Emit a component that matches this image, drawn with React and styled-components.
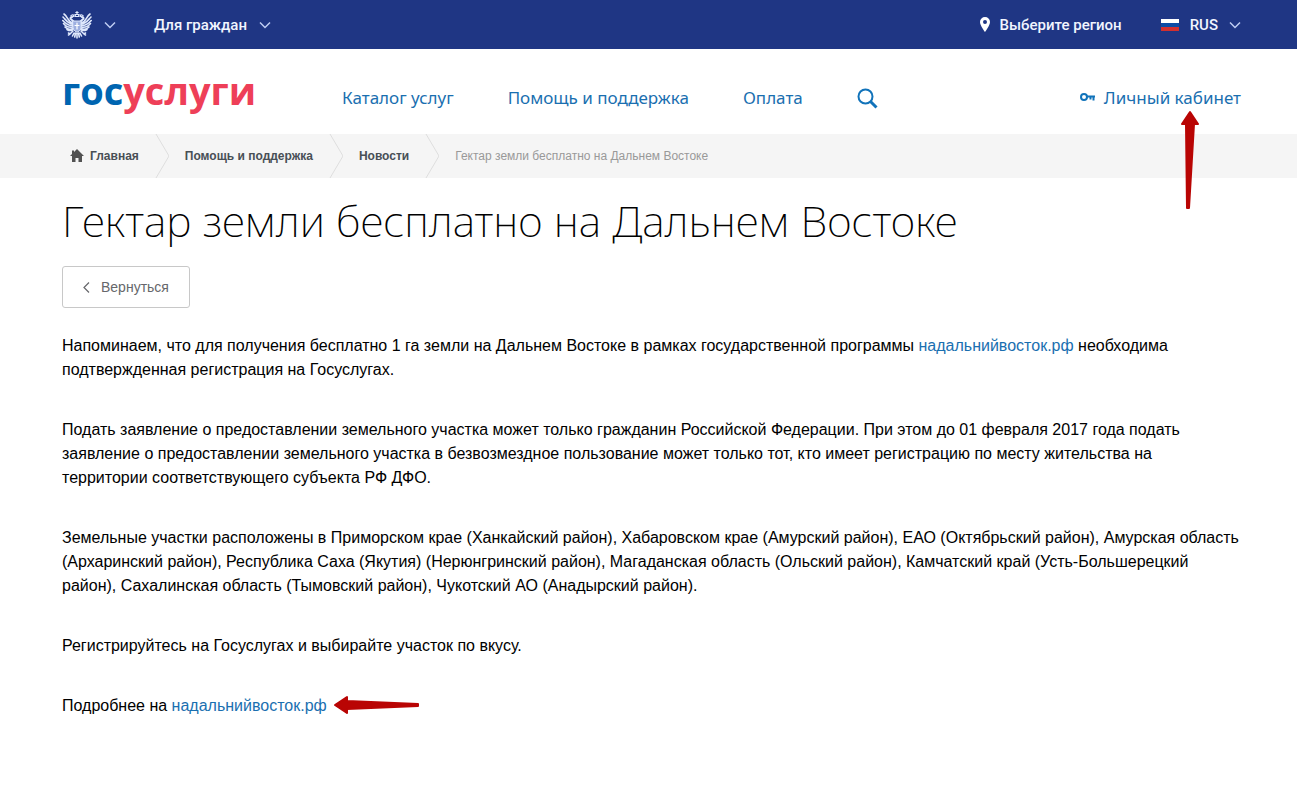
import React from "react";
import styled, { createGlobalStyle } from "styled-components";

const GlobalStyle = createGlobalStyle`
  * { box-sizing: border-box; }
  body { margin: 0; background: #fff; color: #000; font: 16px/24px "Liberation Sans", Arial, sans-serif; }
  a { color: #1a6fb0; text-decoration: none; }
  button { font: inherit; cursor: pointer; }
  svg { display: block; flex: none; }
`;

const Container = styled.div`
  padding: 0 56px 0 62px;
  display: flex;
  align-items: center;
`;

const TopBar = styled(Container)`
  height: 49px;
  background: #1f3684;
  font: 500 15px/20px Roboto, sans-serif;
`;

const TopButton = styled.button`
  display: flex;
  align-items: center;
  gap: ${(p) => p.$gap || 12}px;
  padding: 0;
  border: 0;
  background: none;
  color: #f1f5ff;
`;

const TopRight = styled.div`
  margin-left: auto;
  display: flex;
  gap: 39px;
`;

const Audience = styled.div`
  margin-left: 38px;
`;

const Header = styled(Container)`
  height: 85px;
  padding-top: 12px;
  font: 17px/24px "Noto Sans", sans-serif;
`;

const Logo = styled.a`
  width: 280px;
  flex: none;
  padding-bottom: 16px;
  font: 700 38px/48px "Open Sans", sans-serif;
  color: #0065b1;
  span { color: #ee3f58; }
`;

const Nav = styled.nav`
  display: flex;
  align-items: center;
  gap: 54px;
`;

const SearchButton = styled.button`
  padding: 0;
  border: 0;
  background: none;
  color: #1173ba;
`;

const Account = styled.a`
  position: relative;
  margin-left: auto;
  display: flex;
  align-items: center;
  gap: 9px;
`;

const UpPointer = styled.svg`
  position: absolute;
  top: 24px;
  right: 42px;
`;

const Crumbs = styled(Container).attrs({ as: "nav" })`
  height: 44px;
  padding-left: 70px;
  background: #f5f5f5;
  font: 12px/16px "Liberation Sans", Arial, sans-serif;
  color: #999;
`;

const Crumb = styled.a`
  && { color: #484f56; }
  display: flex;
  align-items: center;
  gap: 6px;
  font-weight: 700;
`;

const Divider = styled.svg`
  margin: 0 16px;
`;

const Main = styled.main`
  padding: 20px 56px 40px 62px;
`;

const Title = styled.h1`
  margin: 0;
  font: 200 43px/46px "Noto Sans", sans-serif;
`;

const BackButton = styled.button`
  display: flex;
  align-items: center;
  gap: 11px;
  height: 42px;
  margin: 22px 0 26px;
  padding: 0 20px;
  border: 1px solid #c8c8c8;
  border-radius: 3px;
  background: #fff;
  color: #66676b;
  font-size: 14px;
`;

const Paragraph = styled.p`
  margin: 0 0 36px;
`;

const PointedLink = styled.a`
  position: relative;
`;

const LeftPointer = styled.svg`
  position: absolute;
  bottom: 0;
  left: 100%;
  margin-left: 6px;
`;

const ChevronDown = () => (
  <svg width="12" height="8" viewBox="0 0 12 8" fill="none" stroke="#bfcdf3" strokeWidth="1.5">
    <path d="M1 1.500l5 5 5-5" />
  </svg>
);

const Eagle = () => (
  <svg width="30" height="28" viewBox="0 0 30 28" fill="none" stroke="#dfe8fc" strokeLinecap="round">
    <path d="M15 .5v3M13.800 1.500h2.400M13 3.500h4l-.5 2h-3zM9 4.500l2-.8 1 1.500-2 .8M21 4.500l-2-.8-1 1.500 2 .8" strokeWidth="1.200" />
    <path d="M10 6c-2 0-2 2-.5 2.500L12 11M20 6c2 0 2 2 .5 2.500L18 11" strokeWidth="2" />
    <path d="M11 12C6 11 6 6 2 3M11 13C6 13 4 9 1 6M11 14.500C7 15 3 12 .8 9.500M11 16c-4 1-7.500-1-9.500-3.500M11 17.500c-3 1.500-6 .5-8-1.500M10.500 19c-2 1-3.500.8-5.500-.5" strokeWidth="1.600" />
    <path d="M19 12c5-1 5-6 9-9M19 13c5 0 7-4 10-7M19 14.500c4 .5 8-2.500 10.200-5M19 16c4 1 7.500-1 9.500-3.500M19 17.500c3 1.500 6 .5 8-1.500M19.500 19c2 1 3.500.8 5.500-.5" strokeWidth="1.600" />
    <path d="M11 10h8v7c0 3-4 4-4 4s-4-1-4-4z" fill="#9dafe0" strokeWidth="1" />
    <path d="M15 12v6M13 14.500h4" stroke="#fff" strokeWidth="1.200" />
    <path d="M11 20l-3 3-1.500 1M8 23l-1.500-1M19 20l3 3 1.500 1M22 23l1.500-1M12 22l-1.500 3M13.500 22l-.8 4M15 22v5M16.500 22l.8 4M18 22l1.500 3" strokeWidth="1.600" />
  </svg>
);

const Separator = () => (
  <Divider width="14" height="44" viewBox="0 0 14 44" fill="none" stroke="#dedede" aria-hidden="true">
    <path d="M1 0l13 22L1 44" />
  </Divider>
);

const program = "надальнийвосток.рф";

export default function App() {
  return (
    <>
      <GlobalStyle />
      <TopBar>
        <TopButton $gap={12} aria-label="Портал">
          <Eagle />
          <ChevronDown />
        </TopButton>
        <Audience>
          <TopButton $gap={12}>Для граждан<ChevronDown /></TopButton>
        </Audience>
        <TopRight>
          <TopButton $gap={10}>
            <svg width="10" height="15" viewBox="0 0 10 15" fill="#fff">
              <path fillRule="evenodd" d="M5 0a5 5 0 0 0-5 5c0 3.500 5 10 5 10s5-6.500 5-10a5 5 0 0 0-5-5zm0 3a2 2 0 1 1 0 4 2 2 0 0 1 0-4z" />
            </svg>
            Выберите регион
          </TopButton>
          <TopButton $gap={11}>
            <svg width="18" height="12" viewBox="0 0 18 12">
              <path fill="#fff" d="M0 0h18v4H0z" />
              <path fill="#0b4ba5" d="M0 4h18v4H0z" />
              <path fill="#d12f2f" d="M0 8h18v4H0z" />
            </svg>
            RUS
            <ChevronDown />
          </TopButton>
        </TopRight>
      </TopBar>
      <Header as="header">
        <Logo href="#">гос<span>услуги</span></Logo>
        <Nav>
          <a href="#catalog">Каталог услуг</a>
          <a href="#help">Помощь и поддержка</a>
          <a href="#pay">Оплата</a>
          <SearchButton aria-label="Поиск">
            <svg width="22" height="22" viewBox="0 0 22 22" fill="none" stroke="currentColor">
              <circle cx="8.500" cy="9.500" r="7" strokeWidth="2" />
              <path d="M13.500 14.500l6 6" strokeWidth="3" />
            </svg>
          </SearchButton>
        </Nav>
        <Account href="#account">
          <svg width="15" height="9" viewBox="0 0 15 9" fill="none" stroke="#1173ba" strokeWidth="2">
            <circle cx="4" cy="4" r="3" />
            <path d="M7 3.500h8M13.500 3.500v4M10.500 3.500v3" />
          </svg>
          Личный кабинет
          <UpPointer width="20" height="100" viewBox="0 0 20 100" fill="#b90504" stroke="#b90504" strokeWidth="2" strokeLinejoin="round" aria-hidden="true">
            <path d="M11 2l8 12h-4l-5 84H8L7 14H3z" />
          </UpPointer>
        </Account>
      </Header>
      <Crumbs>
        <Crumb href="#">
          <svg width="14" height="15" viewBox="0 0 14 15" fill="#525252">
            <path d="M7 0l7 7h-2v6H8.500V9h-3v4H2V7H0l2-2V1.500h2V3z" />
          </svg>
          Главная
        </Crumb>
        <Separator />
        <Crumb href="#help">Помощь и поддержка</Crumb>
        <Separator />
        <Crumb href="#news">Новости</Crumb>
        <Separator />
        <span>Гектар земли бесплатно на Дальнем Востоке</span>
      </Crumbs>
      <Main>
        <Title>Гектар земли бесплатно на Дальнем Востоке</Title>
        <BackButton>
          <svg width="7" height="11" viewBox="0 0 7 11" fill="none" stroke="#66676b" strokeWidth="1.200">
            <path d="M6 .5l-5 5 5 5" />
          </svg>
          Вернуться
        </BackButton>
        <Paragraph>
          Напоминаем, что для получения бесплатно 1 га земли на Дальнем Востоке в рамках государственной программы{" "}
          <a href="#program">{program}</a> необходима подтвержденная регистрация на Госуслугах.
        </Paragraph>
        <Paragraph>
          Подать заявление о предоставлении земельного участка может только гражданин Российской Федерации. При этом до
          01 февраля 2017 года подать заявление о предоставлении земельного участка в безвозмездное пользование может
          только тот, кто имеет регистрацию по месту жительства на территории соответствующего субъекта РФ ДФО.
        </Paragraph>
        <Paragraph>
          Земельные участки расположены в Приморском крае (Ханкайский район), Хабаровском крае (Амурский район), ЕАО
          (Октябрьский район), Амурская область (Архаринский район), Республика Саха (Якутия) (Нерюнгринский район),
          Магаданская область (Ольский район), Камчатский край (Усть-Большерецкий район), Сахалинская область
          (Тымовский район), Чукотский АО (Анадырский район).
        </Paragraph>
        <Paragraph>Регистрируйтесь на Госуслугах и выбирайте участок по вкусу.</Paragraph>
        <Paragraph>
          Подробнее на{" "}
          <PointedLink href="#program">
            {program}
            <LeftPointer width="88" height="20" viewBox="0 0 88 20" fill="#b90504" stroke="#b90504" strokeWidth="2" strokeLinejoin="round" aria-hidden="true">
              <path d="M2 11l12-8v4l71 3v2l-71 3v4z" />
            </LeftPointer>
          </PointedLink>
        </Paragraph>
      </Main>
    </>
  );
}
